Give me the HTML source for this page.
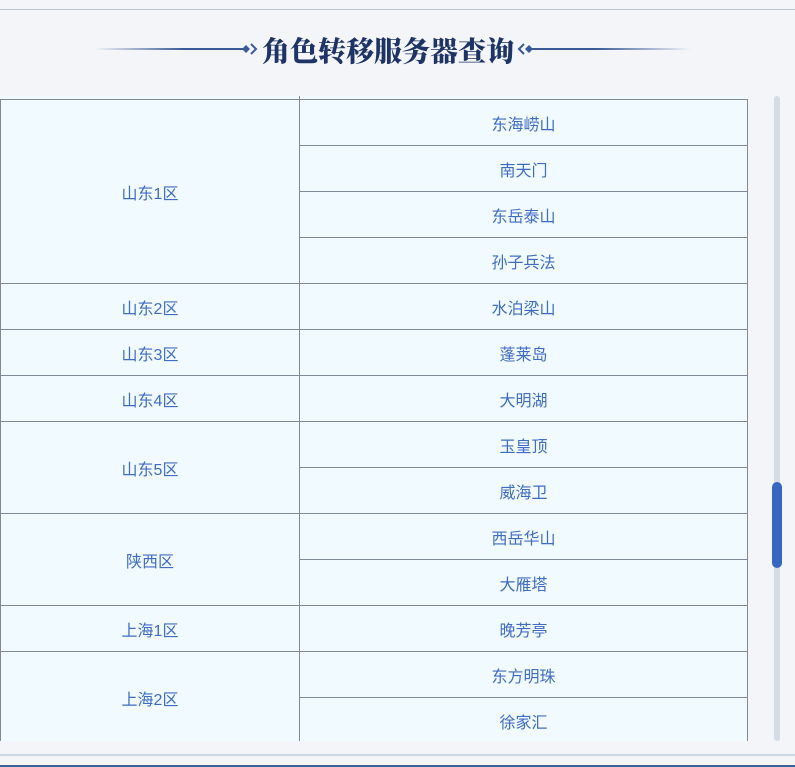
<!DOCTYPE html>
<html><head><meta charset="utf-8"><style>
*{margin:0;padding:0;box-sizing:border-box}
body{width:795px;height:767px;overflow:hidden;background:#f3f5f9;font-family:"Liberation Sans","Noto Sans CJK SC",sans-serif;position:relative}
.topline{position:absolute;left:0;right:0;top:9px;height:1px;background:#b9c3d3}
.title{position:absolute;left:249px;width:278px;top:31px;text-align:center;font-family:"Noto Serif CJK SC",serif;font-weight:900;font-size:28px;color:#1e3466;line-height:38px;white-space:nowrap}
.ln{position:absolute;top:48px;height:2px}
.wrap{position:absolute;left:0;top:96px;width:748px;height:645px;overflow:hidden;background:#f0faff}
table{position:absolute;top:3px;left:0;border-collapse:collapse;width:748px}
td{border:1px solid #7d8a99;height:46px;text-align:center;color:#3f6cc4;font-size:16px;background:#f0faff;padding:0}
td.a{width:299px}
.stub{position:absolute;left:299px;top:0;width:1px;height:4px;background:#7d8a99}
.track{position:absolute;left:774px;top:96px;width:6px;height:645px;background:#d5dce6;border-radius:3px}
.thumb{position:absolute;left:772px;top:482px;width:10px;height:86px;background:#3566c2;border-radius:5px}
.b1{position:absolute;left:0;right:0;top:754px;height:2px;background:#ccd5e2}
.b2{position:absolute;left:0;right:0;top:765px;height:2px;background:#3d5f95}
</style></head><body>
<div class="topline"></div>
<div class="ln" style="left:95px;width:148px;background:linear-gradient(90deg,rgba(58,90,150,0),#3a5a96 60%)"></div>
<div class="ln" style="left:531px;width:160px;background:linear-gradient(90deg,#3a5a96 40%,rgba(58,90,150,0))"></div>
<svg style="position:absolute;left:240px;top:41px" width="20" height="16"><path d="M2 8l4-4 4 4-4 4z" fill="#3a5a96"/><path d="M11 3l5 5-5 5" fill="none" stroke="#3a5a96" stroke-width="2"/></svg>
<svg style="position:absolute;left:515px;top:41px" width="20" height="16"><path d="M10 8l4-4 4 4-4 4z" fill="#3a5a96"/><path d="M9 3l-5 5 5 5" fill="none" stroke="#3a5a96" stroke-width="2"/></svg>
<div class="title">角色转移服务器查询</div>
<div class="wrap"><div class="stub"></div><table>
<tr><td class="a" rowspan="4">山东1区</td><td>东海崂山</td></tr>
<tr><td>南天门</td></tr>
<tr><td>东岳泰山</td></tr>
<tr><td>孙子兵法</td></tr>
<tr><td class="a">山东2区</td><td>水泊梁山</td></tr>
<tr><td class="a">山东3区</td><td>蓬莱岛</td></tr>
<tr><td class="a">山东4区</td><td>大明湖</td></tr>
<tr><td class="a" rowspan="2">山东5区</td><td>玉皇顶</td></tr>
<tr><td>威海卫</td></tr>
<tr><td class="a" rowspan="2">陕西区</td><td>西岳华山</td></tr>
<tr><td>大雁塔</td></tr>
<tr><td class="a">上海1区</td><td>晚芳亭</td></tr>
<tr><td class="a" rowspan="2">上海2区</td><td>东方明珠</td></tr>
<tr><td>徐家汇</td></tr>
</table></div>
<div class="track"></div><div class="thumb"></div>
<div class="b1"></div><div class="b2"></div>
</body></html>
